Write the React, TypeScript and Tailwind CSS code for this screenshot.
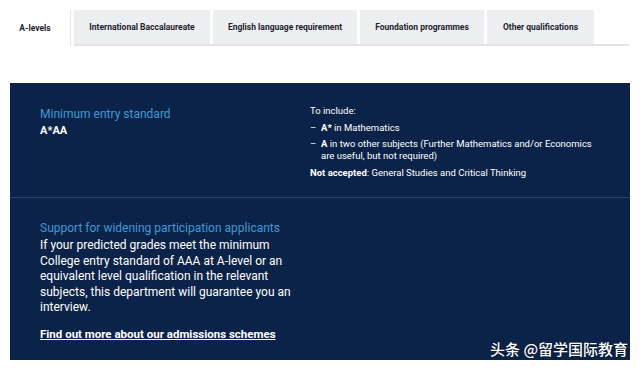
const tabs = [
  { label: "International Baccalaureate", w: "w-[136px]" },
  { label: "English language requirement", w: "w-[144px]" },
  { label: "Foundation programmes", w: "w-[124px]" },
  { label: "Other qualifications", w: "w-[107px]" },
];

export default function App() {
  return (
    <div className="relative w-[640px] h-[370px] bg-white overflow-hidden font-['Roboto',sans-serif]">
      {/* tab strip */}
      <div className="flex items-stretch pt-[10px] h-[46px]">
        <div className="w-[71px] flex items-center justify-center border-r border-[#e3e5e8] text-[8.5px] font-bold text-[#1d2430]">
          A-levels
        </div>
        <div className="flex gap-[3px] ml-[3px] border-b-2 border-[#e1e3e6] pr-[35px]">
          {tabs.map((t) => (
            <div
              key={t.label}
              className={`${t.w} flex items-center justify-center bg-[#eceef0] text-[8.5px] font-bold text-[#1d2430]`}
            >
              {t.label}
            </div>
          ))}
        </div>
      </div>

      {/* navy panel */}
      <div className="mt-[37px] mx-[10px] w-[620px] h-[277px] bg-[#0c2349] text-white">
        <div className="flex h-[115px] border-b border-[#2a4268]">
          <div className="w-[270px] pl-[30px] pt-[22px]">
            <div className="text-[12px] text-[#3c9ad6] leading-[18px]">Minimum entry standard</div>
            <div className="text-[11px] font-bold leading-[16px]">A*AA</div>
          </div>
          <div className="pt-[22px] pl-[30px] text-[9.5px] leading-[12px]">
            <div className="mb-[4.5px]">To include:</div>
            <div className="flex gap-[3px] mb-[4.5px]">
              <span className="w-[8px] shrink-0">–</span>
              <span><b>A*</b> in Mathematics</span>
            </div>
            <div className="flex gap-[3px] mb-[4.5px]">
              <span className="w-[8px] shrink-0">–</span>
              <span className="w-[280px]">
                <b>A</b> in two other subjects (Further Mathematics and/or Economics are useful, but not required)
              </span>
            </div>
            <div>
              <b>Not accepted</b>: General Studies and Critical Thinking
            </div>
          </div>
        </div>
        <div className="pl-[30px] pt-[22px] w-[290px]">
          <div className="text-[12px] text-[#3c9ad6] leading-[17px]">
            Support for widening participation applicants
          </div>
          <p className="text-[12px] leading-[15.5px] mt-[1px]">
            If your predicted grades meet the minimum College entry standard of AAA at A-level or an equivalent level qualification in the relevant subjects, this department will guarantee you an interview.
          </p>
          <a className="block mt-[10px] text-[11.5px] font-bold underline leading-[16px]">
            Find out more about our admissions schemes
          </a>
        </div>
      </div>

      {/* watermark */}
      <div className="absolute right-[12px] top-[338px] text-[15px] font-medium text-white font-['Noto_Sans_CJK_SC',sans-serif] [text-shadow:0_0_2px_rgba(0,0,0,0.6)]">
        头条 @留学国际教育
      </div>
    </div>
  );
}
